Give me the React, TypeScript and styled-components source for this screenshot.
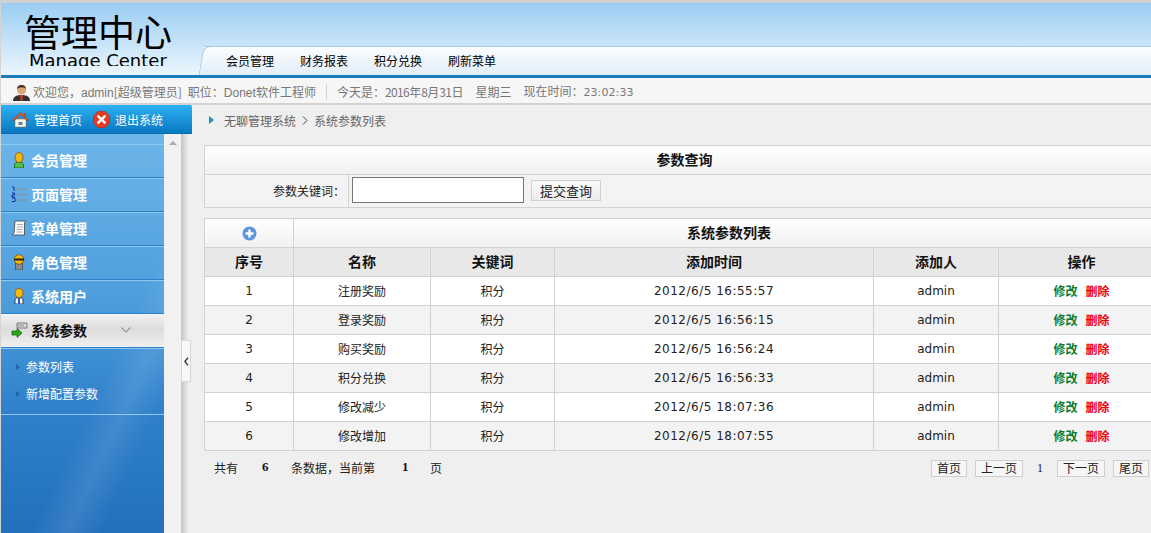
import React from "react";
import styled, { createGlobalStyle } from "styled-components";

const GlobalStyle = createGlobalStyle`
  html, body {
    margin: 0;
    padding: 0;
    height: 100%;
    overflow: hidden;
    background: #efefef;
  }
  body {
    font-family: "Noto Sans CJK SC", "Liberation Sans", sans-serif;
    font-size: 12px;
    color: #333;
  }
`;

const Page = styled.div`
  width: 1151px;
  height: 533px;
  overflow: hidden;
  display: flex;
  flex-direction: column;
  box-sizing: border-box;
  border-top: 3px solid #d0d0d0;
  border-left: 1px solid #d4d4d4;
`;

const Header = styled.div`
  height: 72px;
  flex: none;
  display: flex;
  align-items: flex-end;
  background: linear-gradient(#9acdf3, #ecf6fd);
  border-bottom: 3px solid #1b7bbf;
`;

const Logo = styled.div`
  width: 199px;
  height: 72px;
  flex: none;
  box-sizing: border-box;
  padding: 8px 0 0 23px;
  overflow: hidden;
  color: #000;
`;

const LogoTitle = styled.div`
  font-size: 37px;
  line-height: 40px;
  white-space: nowrap;
`;

const LogoSub = styled.div`
  font-family: "DejaVu Sans", sans-serif;
  font-size: 18px;
  line-height: 20px;
  height: 15px;
  margin: 0 0 0 5px;
  overflow: hidden;
  white-space: nowrap;
`;

const TabBar = styled.div`
  position: relative;
  flex: 1;
  height: 29px;
  margin-left: 4px;
  display: flex;
  align-items: center;
  gap: 26px;
  padding-left: 22px;
  box-sizing: border-box;
  border-top: 1px solid #a6c9ea;
  background: linear-gradient(#fbfdff, #e2eef8);

  &::before {
    content: "";
    position: absolute;
    left: -3px;
    top: -1px;
    bottom: 0;
    width: 14px;
    border-top: 1px solid #a6c9ea;
    border-left: 1px solid #a6c9ea;
    border-top-left-radius: 7px;
    background: linear-gradient(#fbfdff, #e2eef8);
    transform: skewX(-10deg);
  }
`;

const Tab = styled.span`
  position: relative;
  color: #000;
  font-size: 12px;
  line-height: 14px;
`;

const InfoBar = styled.div`
  height: 27px;
  flex: none;
  box-sizing: border-box;
  display: flex;
  align-items: center;
  padding: 3px 0 0 11px;
  background: #f6f6f6;
  border-bottom: 2px solid #d2d2d2;
  color: #777;
  white-space: nowrap;
`;

const InfoText = styled.span<{ $gap?: number }>`
  margin-left: ${(p) => p.$gap ?? 0}px;
  line-height: 14px;
`;

const Latin = styled.span`
  font-family: "Liberation Sans", sans-serif;
`;

const DateDigits = styled.span`
  letter-spacing: -0.6px;
`;

const Clock = styled.span`
  font-family: "DejaVu Sans", sans-serif;
  font-size: 11px;
  letter-spacing: 0.1px;
`;

const InfoSep = styled.span`
  width: 1px;
  height: 16px;
  background: #d0d0d0;
  margin: 0 10px;
`;

const Body = styled.div`
  flex: 1;
  min-height: 0;
  display: flex;
`;

const Aside = styled.div`
  width: 189px;
  flex: none;
  display: flex;
  flex-direction: column;
`;

const QuickNav = styled.div`
  width: 191px;
  height: 29px;
  flex: none;
  box-sizing: border-box;
  display: flex;
  align-items: center;
  padding-left: 11px;
  color: #fff;
  background: linear-gradient(#2db0f2, #0a78c2);
  border-bottom: 1px solid #0a6cb0;
  border-top-right-radius: 2px;
  position: relative;
  z-index: 1;
`;

const QuickLink = styled.span`
  display: flex;
  align-items: center;
  gap: 5px;
  margin-right: 11px;
`;

const AsideRow = styled.div`
  flex: 1;
  min-height: 0;
  display: flex;
`;

const Menu = styled.div`
  width: 163px;
  flex: none;
  padding-top: 10px;
  background:
    linear-gradient(115deg, transparent 62%, rgba(255, 255, 255, 0.1) 72%, transparent 82%),
    linear-gradient(#6db6ea 0%, #4f9fdc 40%, #2f7fca 70%, #2270bd 100%);
`;

const MenuItem = styled.div<{ $active?: boolean }>`
  height: 34px;
  box-sizing: border-box;
  display: flex;
  align-items: center;
  padding: 0 0 2px 10px;
  gap: ${(p) => (p.$active ? 3 : 4)}px;
  font-size: 14px;
  font-weight: 700;
  border-top: 1px solid ${(p) => (p.$active ? "#f5f5f5" : "#8ccaf2")};
  border-bottom: 1px solid #2a80c8;
  color: ${(p) => (p.$active ? "#111" : "#fff")};
  background: ${(p) =>
    p.$active ? "linear-gradient(#f0f0f0, #dcdcdc 45%, #f0f0f0)" : "transparent"};
`;

const Chevron = styled.span`
  margin-left: 30px;
  display: flex;
`;

const SubMenu = styled.div`
  height: 67px;
  box-sizing: border-box;
  padding-top: 4px;
  border-top: 1px solid #8ccaf2;
  border-bottom: 1px solid #8ccaf2;
`;

const SubItem = styled.div`
  height: 27px;
  display: flex;
  align-items: center;
  padding-left: 15px;
  gap: 6px;
  color: #fff;
`;

const Bullet = styled.span`
  width: 0;
  height: 0;
  border-left: 4px solid #1c62ac;
  border-top: 3px solid transparent;
  border-bottom: 3px solid transparent;
`;

const ScrollTrack = styled.div`
  width: 17px;
  flex: none;
  background: #f1f1f1;
  display: flex;
  justify-content: center;
  padding-top: 7px;
  box-sizing: border-box;
`;

const ScrollUp = styled.span`
  width: 0;
  height: 0;
  border-left: 4px solid transparent;
  border-right: 4px solid transparent;
  border-bottom: 4px solid #aaa;
`;

const Splitter = styled.div`
  position: relative;
  width: 9px;
  flex: none;
  background: linear-gradient(90deg, #c4c4c4, #e8e8e8 70%, #efefef);
`;

const SplitHandle = styled.div`
  position: absolute;
  left: 0;
  top: 206px;
  width: 8px;
  height: 40px;
  display: flex;
  align-items: center;
  justify-content: center;
  background: #f8f8f8;
  border: 1px solid #d8d8d8;
`;

const Main = styled.div`
  flex: 1;
  min-width: 0;
  padding-left: 14px;
`;

const Breadcrumb = styled.div`
  height: 30px;
  display: flex;
  align-items: center;
  padding-left: 5px;
  color: #666;
  white-space: nowrap;
`;

const CrumbMark = styled.span`
  width: 0;
  height: 0;
  border-left: 5px solid #1690c8;
  border-top: 4px solid transparent;
  border-bottom: 4px solid transparent;
  margin-right: 10px;
`;

const CrumbArrow = styled.span`
  display: flex;
  margin: 0 6px 0 6px;
`;

const SearchTable = styled.table`
  width: 960px;
  margin-top: 10px;
  border-collapse: collapse;
  table-layout: fixed;
  td, th {
    border: 1px solid #d2d2d2;
    padding: 0;
  }
`;

const GridTable = styled.table`
  width: 960px;
  margin-top: 10px;
  border-collapse: collapse;
  table-layout: fixed;
  td, th {
    border: 1px solid #d2d2d2;
    padding: 0;
    text-align: center;
  }
`;

const Col = styled.col<{ $w: number }>`
  width: ${(p) => p.$w}px;
`;

const TitleCell = styled.th`
  && {
    height: 26px;
    padding-bottom: 2px;
    font-size: 14px;
    font-weight: 700;
    color: #111;
    text-align: center;
    background: linear-gradient(#fff, #f1f1f1);
  }
`;

const PlusCell = styled(TitleCell)`
  && {
    height: 27px;
    padding: 1px 0 0;
  }
  svg {
    display: block;
    margin: 0 auto;
  }
`;

const LabelCell = styled.td`
  && {
    height: 30px;
    padding: 0 3px 2px 0;
    background: #f3f3f3;
    text-align: right;
    color: #222;
  }
`;

const FieldCell = styled.td`
  && {
    padding-bottom: 2px;
    background: #f3f3f3;
  }
`;

const FieldWrap = styled.div`
  display: flex;
  align-items: center;
  padding-left: 3px;
`;

const KeywordInput = styled.input`
  width: 172px;
  height: 26px;
  box-sizing: border-box;
  border: 1px solid #767676;
  background: #fff;
  padding: 0;
  margin-right: 7px;
`;

const SubmitButton = styled.button`
  width: 70px;
  height: 21px;
  box-sizing: border-box;
  padding: 0;
  font-family: inherit;
  font-size: 13px;
  line-height: 17px;
  color: #222;
  border: 1px solid #d0d0d0;
  background: linear-gradient(#fafafa, #ececec);
`;

const HeadCell = styled.th`
  && {
    height: 26px;
    padding-bottom: 2px;
    font-size: 14px;
    font-weight: 700;
    color: #111;
    background: #e8e8e8;
  }
`;

const DataRow = styled.tr<{ $even: boolean }>`
  background: ${(p) => (p.$even ? "#f3f3f3" : "#fff")};
`;

const DataCell = styled.td<{ $spaced?: boolean }>`
  height: 28px;
  color: #222;
  font-family: "DejaVu Sans", sans-serif;
  letter-spacing: ${(p) => (p.$spaced ? "0.5px" : "0")};
`;

const LabelDataCell = styled.td`
  && {
    height: 26px;
    padding-bottom: 2px;
    color: #222;
  }
`;

const ActionLink = styled.a<{ $danger?: boolean }>`
  font-weight: 700;
  margin: 0 4px;
  color: ${(p) => (p.$danger ? "#f00018" : "#0c7c30")};
`;

const Pager = styled.div`
  width: 945px;
  height: 34px;
  display: flex;
  align-items: center;
  color: #222;
  white-space: nowrap;
  padding-left: 10px;
  box-sizing: border-box;
`;

const PagerText = styled.span<{ $w: number; $strong?: boolean }>`
  width: ${(p) => p.$w}px;
  flex: none;
  padding-bottom: 2px;
  font-family: ${(p) => (p.$strong ? '"Liberation Serif", serif' : "inherit")};
  font-weight: ${(p) => (p.$strong ? 700 : 400)};
  color: ${(p) => (p.$strong ? "#111" : "#222")};
  font-size: ${(p) => (p.$strong ? 13 : 12)}px;
`;

const PagerButtons = styled.div`
  margin-left: auto;
  display: flex;
  align-items: center;
  gap: 8px;
`;

const PagerButton = styled.span`
  height: 17px;
  line-height: 13px;
  box-sizing: border-box;
  padding: 0 5px;
  border: 1px solid #cfcfcf;
  background: #f6f6f6;
`;

const PagerNumber = styled.span`
  width: 18px;
  text-align: center;
  font-family: "Liberation Serif", serif;
`;

const UserIcon = () => (
  <svg width="19" height="17" viewBox="0 0 19 17">
    <path d="M1 17c0-4 3-6 8.500-6s8.500 2 8.500 6z" fill="#33302e" />
    <path d="M8 11h3l-.6 6h-1.800z" fill="#c93a2c" />
    <circle cx="9.500" cy="6" r="4.500" fill="#d9a678" />
    <path d="M5 5.500C5 2 7 1 9.500 1S14 2 14 5.500c-1-2-2.500-2-4.500-2S6 3.500 5 5.500z" fill="#4a3426" />
  </svg>
);

const HomeIcon = () => (
  <svg width="17" height="17" viewBox="0 0 17 17">
    <path d="M3 8h11v8H3z" fill="#fbf4dc" stroke="#8a6a3a" strokeWidth=".5" />
    <path d="M6.500 11h4v3h-4z" fill="#5b86b8" />
    <path d="M.5 9 8.500 1.500 16.500 9l-1.500.8-6.500-6-6.500 6z" fill="#e2542c" stroke="#a33414" strokeWidth=".5" />
    <path d="M12 2h2v4l-2-1.800z" fill="#c94a22" />
  </svg>
);

const ExitIcon = () => (
  <svg width="17" height="17" viewBox="0 0 17 17">
    <path d="M5 .5h7L16.500 5v7L12 16.500H5L.5 12V5z" fill="#e63a22" stroke="#c02010" strokeWidth=".6" />
    <path d="m5.300 5.300 6.400 6.400m0-6.400-6.400 6.400" stroke="#fff" strokeWidth="2.400" strokeLinecap="round" />
  </svg>
);

const PersonIcon = () => (
  <svg width="16" height="16" viewBox="0 0 16 16">
    <path d="M3.500 16v-3c0-2 2-3 4.500-3s4.500 1 4.500 3v3z" fill="#52c04a" stroke="#17601a" strokeWidth=".8" />
    <ellipse cx="8" cy="5.500" rx="4" ry="5" fill="#f6b40e" stroke="#7a5508" strokeWidth=".8" />
  </svg>
);

const ListIcon = () => (
  <svg width="16" height="16" viewBox="0 0 16 16">
    <path d="M5 3h11M5 8.500h11M5 14h11" stroke="#8a8f96" strokeWidth="1" />
    <path d="M1 1h2v4M1 7h2.500v2H1v2h3M1 12h3v3.500H1" fill="none" stroke="#0c2e9a" strokeWidth="1" />
  </svg>
);

const ScrollIcon = () => (
  <svg width="16" height="16" viewBox="0 0 16 16">
    <path d="M4 1h11l-1.500 1.500V15H1l2-2z" fill="#fafafa" stroke="#444" strokeWidth=".8" />
    <path d="M6 4.500h6M6 7h6M5.500 9.500h6M5.500 12h6" stroke="#999" strokeWidth=".8" />
  </svg>
);

const RoleIcon = () => (
  <svg width="16" height="16" viewBox="0 0 16 16">
    <path d="M4.500 9h7v7h-7z" fill="#8a8a8a" stroke="#333" strokeWidth=".6" />
    <circle cx="8" cy="5.500" r="4.800" fill="#f6b40e" stroke="#7a5508" strokeWidth=".8" />
    <path d="M3 4.500h10v2H3z" fill="#222" />
  </svg>
);

const StaffIcon = () => (
  <svg width="16" height="16" viewBox="0 0 16 16">
    <path d="M4 16v-4c0-1.500 1.500-2.500 4-2.500s4 1 4 2.500v4z" fill="#f2f4f8" stroke="#222" strokeWidth=".8" />
    <path d="M7 10h2v6H7z" fill="#2060b0" />
    <ellipse cx="8" cy="5" rx="4" ry="4.600" fill="#f9b90a" stroke="#8a5c08" strokeWidth=".8" />
  </svg>
);

const ParamIcon = () => (
  <svg width="17" height="16" viewBox="0 0 17 16">
    <path d="M6 1h10v5H6z" fill="#d8d8d8" stroke="#666" strokeWidth=".8" />
    <path d="M8 2.500v2M10 2.500v2M12 2.500v2" stroke="#666" strokeWidth=".8" />
    <path d="M1 9h5V6.500l5 4.500-5 4.500V13H1z" fill="#2ca618" stroke="#0e5a08" strokeWidth=".7" />
  </svg>
);

const ChevronDownIcon = () => (
  <svg width="12" height="8" viewBox="0 0 12 8">
    <path d="m1.500 1.500 4.500 4.500 4.500-4.500" fill="none" stroke="#999" strokeWidth="1.200" />
  </svg>
);

const ChevronLeftIcon = () => (
  <svg width="5" height="9" viewBox="0 0 5 9">
    <path d="M4 .8.800 4.500 4 8.200" fill="none" stroke="#333" strokeWidth="1.300" />
  </svg>
);

const CrumbArrowIcon = () => (
  <svg width="6" height="9" viewBox="0 0 6 9">
    <path d="m1 .5 4 4-4 4" fill="none" stroke="#444" strokeWidth="1" />
  </svg>
);

const PlusIcon = () => (
  <svg width="15" height="15" viewBox="0 0 15 15">
    <circle cx="7.500" cy="7.500" r="7" fill="#5a97dd" />
    <path d="M7.500 3.500v8M3.500 7.500h8" stroke="#fff" strokeWidth="2.400" />
  </svg>
);

const menus = [
  { name: "会员管理", icon: <PersonIcon /> },
  { name: "页面管理", icon: <ListIcon /> },
  { name: "菜单管理", icon: <ScrollIcon /> },
  { name: "角色管理", icon: <RoleIcon /> },
  { name: "系统用户", icon: <StaffIcon /> },
];

const rows = [
  { id: 1, name: "注册奖励", time: "2012/6/5 16:55:57" },
  { id: 2, name: "登录奖励", time: "2012/6/5 16:56:15" },
  { id: 3, name: "购买奖励", time: "2012/6/5 16:56:24" },
  { id: 4, name: "积分兑换", time: "2012/6/5 16:56:33" },
  { id: 5, name: "修改减少", time: "2012/6/5 18:07:36" },
  { id: 6, name: "修改增加", time: "2012/6/5 18:07:55" },
];

export default function App() {
  return (
    <Page>
      <GlobalStyle />
      <Header>
        <Logo>
          <LogoTitle>管理中心</LogoTitle>
          <LogoSub>Manage Center</LogoSub>
        </Logo>
        <TabBar>
          <Tab>会员管理</Tab>
          <Tab>财务报表</Tab>
          <Tab>积分兑换</Tab>
          <Tab>刷新菜单</Tab>
        </TabBar>
      </Header>
      <InfoBar>
        <UserIcon />
        <InfoText $gap={2}>欢迎您，<Latin>admin</Latin>[超级管理员]</InfoText>
        <InfoText $gap={6}>职位：<Latin>Donet</Latin>软件工程师</InfoText>
        <InfoSep />
        <InfoText>
          今天是：<DateDigits>2016</DateDigits>年<DateDigits>8</DateDigits>月<DateDigits>31</DateDigits>日
        </InfoText>
        <InfoText $gap={12}>星期三</InfoText>
        <InfoText $gap={12}>现在时间：<Clock>23:02:33</Clock></InfoText>
      </InfoBar>
      <Body>
        <Aside>
          <QuickNav>
            <QuickLink><HomeIcon />管理首页</QuickLink>
            <QuickLink><ExitIcon />退出系统</QuickLink>
          </QuickNav>
          <AsideRow>
            <Menu>
              {menus.map((m) => (
                <MenuItem key={m.name}>{m.icon}{m.name}</MenuItem>
              ))}
              <MenuItem $active>
                <ParamIcon />
                系统参数
                <Chevron><ChevronDownIcon /></Chevron>
              </MenuItem>
              <SubMenu>
                <SubItem><Bullet />参数列表</SubItem>
                <SubItem><Bullet />新增配置参数</SubItem>
              </SubMenu>
            </Menu>
            <ScrollTrack><ScrollUp /></ScrollTrack>
            <Splitter>
              <SplitHandle><ChevronLeftIcon /></SplitHandle>
            </Splitter>
          </AsideRow>
        </Aside>
        <Main>
          <Breadcrumb>
            <CrumbMark />
            无聊管理系统
            <CrumbArrow><CrumbArrowIcon /></CrumbArrow>
            系统参数列表
          </Breadcrumb>
          <SearchTable>
            <colgroup>
              <Col $w={144} />
              <Col $w={816} />
            </colgroup>
            <tbody>
              <tr>
                <TitleCell colSpan={2}>参数查询</TitleCell>
              </tr>
              <tr>
                <LabelCell>参数关键词：</LabelCell>
                <FieldCell>
                  <FieldWrap>
                    <KeywordInput type="text" />
                    <SubmitButton type="button">提交查询</SubmitButton>
                  </FieldWrap>
                </FieldCell>
              </tr>
            </tbody>
          </SearchTable>
          <GridTable>
            <colgroup>
              <Col $w={89} />
              <Col $w={137} />
              <Col $w={124} />
              <Col $w={319} />
              <Col $w={125} />
              <Col $w={166} />
            </colgroup>
            <thead>
              <tr>
                <PlusCell><PlusIcon /></PlusCell>
                <TitleCell colSpan={5}>系统参数列表</TitleCell>
              </tr>
              <tr>
                <HeadCell>序号</HeadCell>
                <HeadCell>名称</HeadCell>
                <HeadCell>关键词</HeadCell>
                <HeadCell>添加时间</HeadCell>
                <HeadCell>添加人</HeadCell>
                <HeadCell>操作</HeadCell>
              </tr>
            </thead>
            <tbody>
              {rows.map((r) => (
                <DataRow key={r.id} $even={r.id % 2 === 0}>
                  <DataCell>{r.id}</DataCell>
                  <LabelDataCell>{r.name}</LabelDataCell>
                  <LabelDataCell>积分</LabelDataCell>
                  <DataCell $spaced>{r.time}</DataCell>
                  <DataCell>admin</DataCell>
                  <LabelDataCell>
                    <ActionLink>修改</ActionLink>
                    <ActionLink $danger>删除</ActionLink>
                  </LabelDataCell>
                </DataRow>
              ))}
            </tbody>
          </GridTable>
          <Pager>
            <PagerText $w={48}>共有</PagerText>
            <PagerText $w={29} $strong>6</PagerText>
            <PagerText $w={111}>条数据，当前第</PagerText>
            <PagerText $w={28} $strong>1</PagerText>
            <PagerText $w={12}>页</PagerText>
            <PagerButtons>
              <PagerButton>首页</PagerButton>
              <PagerButton>上一页</PagerButton>
              <PagerNumber>1</PagerNumber>
              <PagerButton>下一页</PagerButton>
              <PagerButton>尾页</PagerButton>
            </PagerButtons>
          </Pager>
        </Main>
      </Body>
    </Page>
  );
}
